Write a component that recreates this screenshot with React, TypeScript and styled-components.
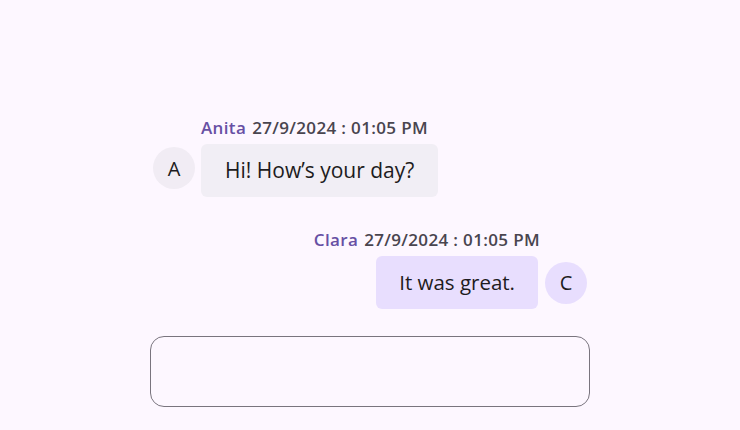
import styled, { createGlobalStyle } from "styled-components";

const GlobalStyle = createGlobalStyle`
  html, body {
    margin: 0;
    padding: 0;
    background: #fdf7ff;
    font-family: "Open Sans", "Noto Sans", sans-serif;
  }
`;

const Page = styled.div`
  width: 740px;
  height: 430px;
  display: flex;
  justify-content: center;
  box-sizing: border-box;
  padding-top: 118px;
`;

const Chat = styled.div`
  width: 440px;
  display: flex;
  flex-direction: column;
`;

const Message = styled.div<{ $own?: boolean }>`
  display: grid;
  grid-template-columns: ${(p) => (p.$own ? "1fr 42px" : "42px 1fr")};
  column-gap: ${(p) => (p.$own ? "7px" : "6px")};
  row-gap: 6px;
  padding: ${(p) => (p.$own ? "0 3px 0 0" : "0 0 0 3px")};
  margin-bottom: ${(p) => (p.$own ? "0" : "33px")};
`;

const Header = styled.div<{ $own?: boolean }>`
  grid-row: 1;
  grid-column: ${(p) => (p.$own ? "1" : "2")};
  justify-self: ${(p) => (p.$own ? "end" : "start")};
  margin-right: ${(p) => (p.$own ? "-2px" : "0")};
  font-size: 17px;
  line-height: 20px;
  font-weight: 600;
  letter-spacing: 0.35px;
  color: #49454f;
`;

const Name = styled.span`
  color: #6750a4;
  margin-right: 6px;
`;

const Avatar = styled.div<{ $own?: boolean }>`
  grid-row: 2;
  grid-column: ${(p) => (p.$own ? "2" : "1")};
  align-self: center;
  margin-top: ${(p) => (p.$own ? "0" : "-5px")};
  width: 42px;
  height: 42px;
  border-radius: 50%;
  background: ${(p) => (p.$own ? "#e8defe" : "#f1ecf4")};
  color: #1d1b20;
  font-size: 20px;
  display: flex;
  align-items: center;
  justify-content: center;
`;

const Bubble = styled.div<{ $own?: boolean }>`
  grid-row: 2;
  grid-column: ${(p) => (p.$own ? "1" : "2")};
  justify-self: ${(p) => (p.$own ? "end" : "start")};
  background: ${(p) => (p.$own ? "#e8defe" : "#f1eef5")};
  color: #1d1b20;
  border-radius: 6px;
  padding: ${(p) => (p.$own ? "14px 23px" : "14px 24px")};
  font-size: ${(p) => (p.$own ? "20.5px" : "21px")};
  line-height: 25px;
`;

const Input = styled.textarea`
  margin-top: 27px;
  width: 440px;
  height: 71px;
  box-sizing: border-box;
  border: 1.5px solid #79747e;
  border-radius: 14px;
  background: transparent;
  resize: none;
  outline: none;
  font-family: inherit;
  font-size: 16px;
  padding: 12px 16px;
`;

export default function App() {
  return (
    <>
      <GlobalStyle />
      <Page>
        <Chat>
          <Message>
            <Header>
              <Name>Anita</Name>27/9/2024 : 01:05 PM
            </Header>
            <Avatar>A</Avatar>
            <Bubble>Hi! How’s your day?</Bubble>
          </Message>
          <Message $own>
            <Header $own>
              <Name>Clara</Name>27/9/2024 : 01:05 PM
            </Header>
            <Bubble $own>It was great.</Bubble>
            <Avatar $own>C</Avatar>
          </Message>
          <Input />
        </Chat>
      </Page>
    </>
  );
}
